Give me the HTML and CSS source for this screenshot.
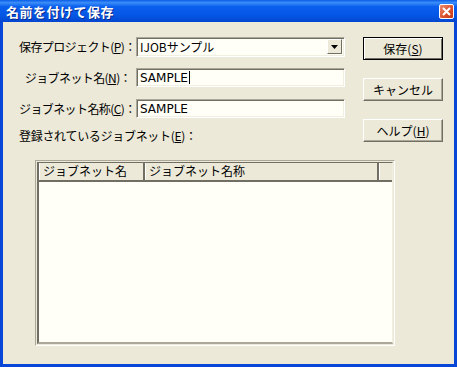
FILE: index.html
```html
<!DOCTYPE html>
<html lang="ja">
<head>
    <meta charset="UTF-8">
    <title>名前を付けて保存</title>
    <link rel="stylesheet" href="styles.css">
</head>
<body>
    <div class="window">
        <div class="titlebar">
            <span class="title">名前を付けて保存</span>
            <span class="close-btn">
                <svg width="9" height="9" viewBox="0 0 9 9"><path d="M1 1 L8 8 M8 1 L1 8" stroke="#fff" stroke-width="2"/></svg>
            </span>
        </div>
        <div class="dialog">
            <div class="top">
                <div class="form">
                    <div class="row">
                        <label>保存プロジェクト(<u>P</u>)：</label>
                        <div class="combo">
                            <span class="combo-text">IJOBサンプル</span>
                            <span class="combo-arrow">
                                <svg width="7" height="4" viewBox="0 0 7 4"><path d="M0 0 H7 L3.5 4 Z" fill="#000"/></svg>
                            </span>
                        </div>
                    </div>
                    <div class="row">
                        <label>ジョブネット名(<u>N</u>)：</label>
                        <div class="field">SAMPLE<span class="caret"></span></div>
                    </div>
                    <div class="row">
                        <label>ジョブネット名称(<u>C</u>)：</label>
                        <div class="field">SAMPLE</div>
                    </div>
                    <div class="list-label">登録されているジョブネット(<u>E</u>)：</div>
                </div>
                <div class="buttons">
                    <button class="btn default">保存(<u>S</u>)</button>
                    <button class="btn">キャンセル</button>
                    <button class="btn">ヘルプ(<u>H</u>)</button>
                </div>
            </div>
            <div class="listbox">
                <div class="list-inner">
                    <div class="list-header">
                        <div class="col col-name">ジョブネット名</div>
                        <div class="col col-title">ジョブネット名称</div>
                        <div class="col col-rest"></div>
                    </div>
                </div>
            </div>
        </div>
    </div>
</body>
</html>
```

FILE: styles.css
```css
body {
    margin: 0;
    padding: 0;
    width: 457px;
    height: 367px;
    overflow: hidden;
    font-family: "Noto Sans CJK JP", "DejaVu Sans", sans-serif;
    font-size: 12px;
    color: #000;
}

.window {
    width: 457px;
    height: 367px;
    box-sizing: border-box;
    background: #0846d8;
    padding: 0 3px 3px 3px;
    display: flex;
    flex-direction: column;
}

.titlebar {
    height: 22px;
    flex-shrink: 0;
    margin: 0 -3px;
    padding: 0 3px 0 6px;
    display: flex;
    align-items: center;
    justify-content: space-between;
    background: linear-gradient(#0a5ce8, #3b8ef7 12%, #0b5fee 30%, #0457e5 70%, #0346cf);
}

.title {
    color: #fff;
    font-weight: bold;
    font-size: 13px;
    letter-spacing: 0.5px;
    text-shadow: 1px 1px 0 #0a2a8a;
}

.close-btn {
    width: 15px;
    height: 15px;
    margin-top: 1px;
    box-sizing: border-box;
    border: 1px solid #fff;
    border-radius: 2px;
    background: linear-gradient(135deg, #f08a6c, #d9502a 60%, #c2381a);
    display: flex;
    align-items: center;
    justify-content: center;
}

.dialog {
    flex: 1;
    min-height: 0;
    overflow: hidden;
    background: #ece9d8;
    padding: 15px 0 0 16px;
}

.top {
    display: flex;
    align-items: flex-start;
}

.form {
    display: flex;
    flex-direction: column;
    gap: 12px;
    width: 326px;
}

.row {
    display: flex;
    align-items: center;
    height: 19px;
}

.row label {
    width: 117px;
    box-sizing: border-box;
    padding-right: 5px;
    text-align: right;
    white-space: nowrap;
    letter-spacing: -0.6px;
}

.field,
.combo {
    width: 209px;
    height: 19px;
    box-sizing: border-box;
    background: #fffff7;
    border-top: 1px solid #aca899;
    border-left: 1px solid #aca899;
    border-right: 1px solid #fff;
    border-bottom: 1px solid #fff;
    box-shadow: inset 1px 1px 0 #716f64, inset -1px -1px 0 #f1efe2;
    padding: 0 0 0 3px;
    font-family: "DejaVu Sans", sans-serif;
    font-size: 12px;
    display: flex;
    align-items: center;
}

.combo {
    height: 20px;
    justify-content: space-between;
    padding-right: 2px;
}

.combo-text {
    font-family: "Noto Sans CJK JP", sans-serif;
}

.combo-arrow {
    width: 15px;
    height: 15px;
    box-sizing: border-box;
    background: #ece9d8;
    border-top: 1px solid #fff;
    border-left: 1px solid #fff;
    border-right: 1px solid #716f64;
    border-bottom: 1px solid #716f64;
    display: flex;
    align-items: center;
    justify-content: center;
}

.caret {
    display: inline-block;
    width: 1px;
    height: 13px;
    background: #000;
    margin-left: 1px;
}

.list-label {
    margin-top: -3px;
    letter-spacing: -0.3px;
}

.buttons {
    display: flex;
    flex-direction: column;
    gap: 18px;
    margin-left: 18px;
}

.btn {
    width: 80px;
    height: 23px;
    box-sizing: border-box;
    background: #ece9d8;
    font-family: "Noto Sans CJK JP", sans-serif;
    font-size: 12px;
    color: #000;
    padding: 0;
    border-top: 1px solid #fff;
    border-left: 1px solid #fff;
    border-right: 1px solid #716f64;
    border-bottom: 1px solid #716f64;
    box-shadow: inset -1px -1px 0 #aca899;
}

.btn.default {
    border: 1px solid #000;
    box-shadow: inset 1px 1px 0 #fff, inset -1px -1px 0 #716f64;
}

.listbox {
    width: 360px;
    height: 186px;
    box-sizing: border-box;
    margin: 16px 0 0 16px;
    border-top: 1px solid #aca899;
    border-left: 1px solid #aca899;
    border-right: 1px solid #fff;
    border-bottom: 1px solid #fff;
    padding: 1px;
}

.list-inner {
    height: 100%;
    box-sizing: border-box;
    background: #fffff7;
    border-top: 1px solid #716f64;
    border-left: 2px solid #716f64;
    border-right: 1px solid #f1efe2;
    border-bottom: 2px solid #aca899;
}

.list-header {
    display: flex;
    height: 17px;
    background: #ece9d8;
    border-bottom: 2px solid #716f64;
}

.col {
    box-sizing: border-box;
    padding-left: 4px;
    line-height: 16px;
    border-right: 2px solid #716f64;
    box-shadow: inset 1px 0 0 #fff;
}

.col-name {
    width: 106px;
}

.col-title {
    width: 234px;
}

.col-rest {
    flex: 1;
    border-right: none;
}
```
